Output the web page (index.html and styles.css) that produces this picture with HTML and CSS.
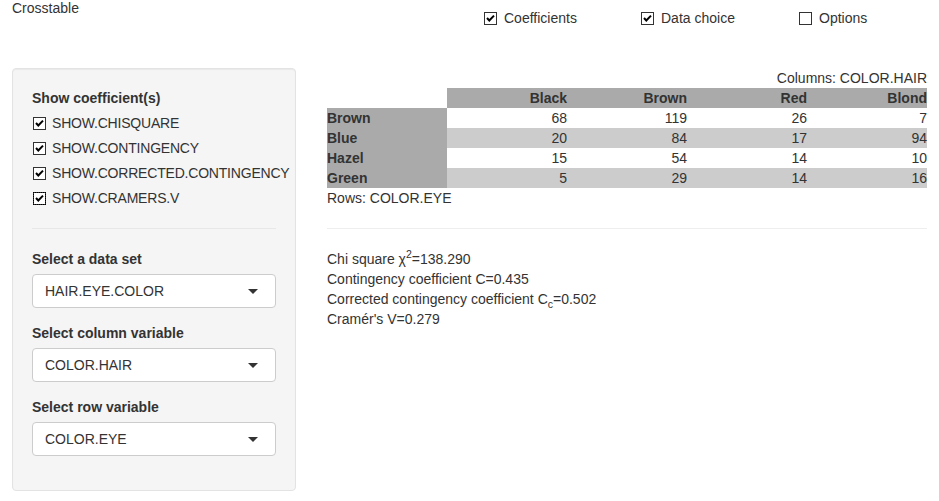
FILE: index.html
```html
<!DOCTYPE html>
<html>
<head>
<meta charset="utf-8">
<title>Crosstable</title>
<link rel="stylesheet" href="styles.css">
</head>
<body>
<div class="topbar">
  <div class="title">Crosstable</div>
  <label class="cb top-cb"><span class="box"><svg width="13" height="13" viewBox="0 0 13 13"><rect x="0.5" y="0.5" width="12" height="12" fill="#fff" stroke="#333"/><path d="M3 6 L5.3 8.5 L10 3.6" fill="none" stroke="#000" stroke-width="2"/></svg></span>Coefficients</label>
  <label class="cb top-cb"><span class="box"><svg width="13" height="13" viewBox="0 0 13 13"><rect x="0.5" y="0.5" width="12" height="12" fill="#fff" stroke="#333"/><path d="M3 6 L5.3 8.5 L10 3.6" fill="none" stroke="#000" stroke-width="2"/></svg></span>Data choice</label>
  <label class="cb top-cb"><span class="box"><svg width="13" height="13" viewBox="0 0 13 13"><rect x="0.5" y="0.5" width="12" height="12" fill="#fff" stroke="#333"/></svg></span>Options</label>
</div>
<div class="main-row">
  <div class="sidebar">
    <div class="group">
      <div class="label">Show coefficient(s)</div>
      <label class="cb side-cb"><span class="box"><svg width="13" height="13" viewBox="0 0 13 13"><rect x="0.5" y="0.5" width="12" height="12" fill="#fff" stroke="#333"/><path d="M3 6 L5.3 8.5 L10 3.6" fill="none" stroke="#000" stroke-width="2"/></svg></span>SHOW.CHISQUARE</label>
      <label class="cb side-cb"><span class="box"><svg width="13" height="13" viewBox="0 0 13 13"><rect x="0.5" y="0.5" width="12" height="12" fill="#fff" stroke="#333"/><path d="M3 6 L5.3 8.5 L10 3.6" fill="none" stroke="#000" stroke-width="2"/></svg></span>SHOW.CONTINGENCY</label>
      <label class="cb side-cb"><span class="box"><svg width="13" height="13" viewBox="0 0 13 13"><rect x="0.5" y="0.5" width="12" height="12" fill="#fff" stroke="#333"/><path d="M3 6 L5.3 8.5 L10 3.6" fill="none" stroke="#000" stroke-width="2"/></svg></span>SHOW.CORRECTED.CONTINGENCY</label>
      <label class="cb side-cb"><span class="box focused"><svg width="13" height="13" viewBox="0 0 13 13"><rect x="0.5" y="0.5" width="12" height="12" fill="#fff" stroke="#333"/><path d="M3 6 L5.3 8.5 L10 3.6" fill="none" stroke="#000" stroke-width="2"/></svg></span>SHOW.CRAMERS.V</label>
    </div>
    <hr class="rule side-rule">
    <div class="field">
      <div class="label">Select a data set</div>
      <div class="select"><span>HAIR.EYE.COLOR</span><span class="caret"></span></div>
    </div>
    <div class="field">
      <div class="label">Select column variable</div>
      <div class="select"><span>COLOR.HAIR</span><span class="caret"></span></div>
    </div>
    <div class="field">
      <div class="label">Select row variable</div>
      <div class="select"><span>COLOR.EYE</span><span class="caret"></span></div>
    </div>
  </div>
  <div class="content">
    <div class="colcap">Columns: COLOR.HAIR</div>
    <table class="xtab">
      <thead>
        <tr><th class="corner"></th><th>Black</th><th>Brown</th><th>Red</th><th>Blond</th></tr>
      </thead>
      <tbody>
        <tr><th>Brown</th><td>68</td><td>119</td><td>26</td><td>7</td></tr>
        <tr class="alt"><th>Blue</th><td>20</td><td>84</td><td>17</td><td>94</td></tr>
        <tr><th>Hazel</th><td>15</td><td>54</td><td>14</td><td>10</td></tr>
        <tr class="alt"><th>Green</th><td>5</td><td>29</td><td>14</td><td>16</td></tr>
      </tbody>
    </table>
    <div class="rowcap">Rows: COLOR.EYE</div>
    <hr class="rule main-rule">
    <div class="stats">
      <div>Chi square χ<sup>2</sup>=138.290</div>
      <div>Contingency coefficient C=0.435</div>
      <div>Corrected contingency coefficient C<sub>c</sub>=0.502</div>
      <div>Cramér's V=0.279</div>
    </div>
  </div>
</div>
</body>
</html>
```
FILE: styles.css
```css
* { box-sizing: border-box; }
html, body { margin: 0; padding: 0; background: #fff; }
body {
  font-family: "Liberation Sans", Arial, Helvetica, sans-serif;
  font-size: 14px;
  line-height: 20px;
  color: #333;
  width: 939px;
}
.topbar {
  display: grid;
  grid-template-columns: 484px 157px 158px 1fr;
  height: 67px;
}
.title {
  padding-left: 12px;
  line-height: 16px;
}
.cb {
  display: flex;
  align-items: flex-start;
  line-height: 20px;
  white-space: nowrap;
}
.box {
  display: block;
  width: 13px;
  height: 13px;
  margin-top: 4px;
  margin-right: 6px;
  flex: 0 0 13px;
}
.box svg { display: block; }
.top-cb { margin-top: 8px; }
.top-cb .box { margin-right: 7px; }
.box.focused { outline: 1px dotted #000; outline-offset: -1px; }

.main-row {
  display: flex;
  padding-left: 12px;
  align-items: flex-start;
}
.sidebar {
  flex: 0 0 284px;
  width: 284px;
  margin-top: 1px;
  background: #f5f5f5;
  border: 1px solid #e3e3e3;
  border-radius: 4px;
  box-shadow: inset 0 1px 1px rgba(0,0,0,0.05);
  padding: 19px 19px 19px 19px;
}
.label {
  font-weight: bold;
  margin-bottom: 5px;
}
.group { display: flex; flex-direction: column; gap: 5px; }
.group .label { margin-bottom: 0; }
.side-cb { padding-left: 1px; letter-spacing: -0.2px; }
.rule {
  border: 0;
  border-top: 1px solid #eee;
  margin: 20px 0;
  height: 0;
}
.side-rule { border-top-color: #e7e7e7; }
.field { margin-bottom: 15px; }
.select {
  height: 34px;
  background: #fff;
  border: 1px solid #ccc;
  border-radius: 4px;
  display: flex;
  align-items: center;
  justify-content: space-between;
  padding: 0 17px 0 12px;
}
.caret {
  width: 0;
  height: 0;
  border-left: 5px solid transparent;
  border-right: 5px solid transparent;
  border-top: 5px solid #333;
  margin-top: 1px;
}
.content {
  margin-left: 31px;
  margin-top: 1px;
  width: 600px;
}
.colcap { text-align: right; }
.xtab {
  width: 600px;
  border-collapse: collapse;
  table-layout: fixed;
}
.xtab th, .xtab td {
  padding: 0;
  height: 20px;
  line-height: 20px;
  text-align: right;
  width: 120px;
}
.xtab thead th { background: #aaa; font-weight: bold; }
.xtab thead th.corner { background: #fff; }
.xtab tbody th { background: #aaa; text-align: left; font-weight: bold; }
.xtab tbody tr.alt td { background: #ccc; }
.main-rule { margin: 20px 0 20px 0; }
.stats sup, .stats sub { font-size: 10.5px; line-height: 0; }
```
